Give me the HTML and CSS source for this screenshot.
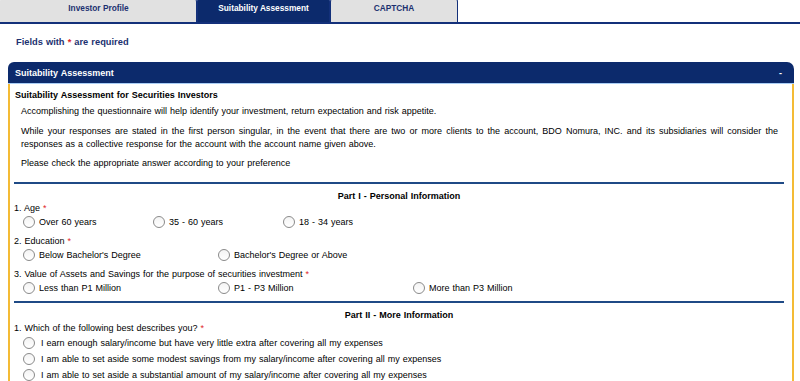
FILE: index.html
```html
<!DOCTYPE html>
<html lang="en">
<head>
  <meta charset="UTF-8">
  <title>Suitability Assessment</title>
  <meta name="viewport" content="width=device-width, initial-scale=1.0">
  <link rel="stylesheet" href="styles.css">
</head>
<body>

<div class="tabs">
  <div class="tab tab-profile">Investor Profile</div>
  <div class="tab tab-suit active">Suitability Assessment</div>
  <div class="tab tab-captcha">CAPTCHA</div>
</div>

<p class="required-note">Fields with <span class="req">*</span> are required</p>

<div class="panel">
  <div class="panel-head">
    <span>Suitability Assessment</span>
    <span class="toggle">-</span>
  </div>

  <div class="panel-body">
    <h3 class="intro-title">Suitability Assessment for Securities Investors</h3>
    <p class="intro">Accomplishing the questionnaire will help identify your investment, return expectation and risk appetite.</p>
    <p class="intro">While your responses are stated in the first person singular, in the event that there are two or more clients to the account, BDO Nomura, INC. and its subsidiaries will consider the responses as a collective response for the account with the account name given above.</p>
    <p class="intro">Please check the appropriate answer according to your preference</p>

    <!-- Part I -->
    <div class="part">Part I - Personal Information</div>

    <div class="question">
      <div class="q-label">1. Age <span class="req">*</span></div>
      <div class="options cols-age">
        <label class="opt"><input type="radio" name="age"> Over 60 years</label>
        <label class="opt"><input type="radio" name="age"> 35 - 60 years</label>
        <label class="opt"><input type="radio" name="age"> 18 - 34 years</label>
      </div>
    </div>

    <div class="question">
      <div class="q-label">2. Education <span class="req">*</span></div>
      <div class="options cols-wide">
        <label class="opt"><input type="radio" name="edu"> Below Bachelor's Degree</label>
        <label class="opt"><input type="radio" name="edu"> Bachelor's Degree or Above</label>
      </div>
    </div>

    <div class="question">
      <div class="q-label">3. Value of Assets and Savings for the purpose of securities investment <span class="req">*</span></div>
      <div class="options cols-wide">
        <label class="opt"><input type="radio" name="assets"> Less than P1 Million</label>
        <label class="opt"><input type="radio" name="assets"> P1 - P3 Million</label>
        <label class="opt"><input type="radio" name="assets"> More than P3 Million</label>
      </div>
    </div>

    <!-- Part II -->
    <div class="part">Part II - More Information</div>

    <div class="question">
      <div class="q-label q-tight">1. Which of the following best describes you? <span class="req">*</span></div>
      <div class="options stacked">
        <label class="opt"><input type="radio" name="income"> I earn enough salary/income but have very little extra after covering all my expenses</label>
        <label class="opt"><input type="radio" name="income"> I am able to set aside some modest savings from my salary/income after covering all my expenses</label>
        <label class="opt"><input type="radio" name="income"> I am able to set aside a substantial amount of my salary/income after covering all my expenses</label>
      </div>
    </div>
  </div>
</div>

</body>
</html>
```

FILE: styles.css
```css
body {
  margin: 0;
  padding: 0;
  font-family: "Liberation Sans", Arial, sans-serif;
  font-size: 9px;
  word-spacing: 0.5px;
  color: #000;
  background: #fff;
}

/* tab bar, top of the tabs is scrolled out of view */
.tabs {
  display: flex;
  margin-top: -4px;
  border-bottom: 2px solid #13307a;
}

.tab {
  height: 26px;
  box-sizing: border-box;
  padding-bottom: 3px;
  display: flex;
  align-items: center;
  justify-content: center;
  font-size: 8.3px;
  font-weight: bold;
  word-spacing: 0;
  color: #1c3170;
  background: #e1e1e1;
  border: 1px solid #13307a;
  border-bottom: 0;
  border-radius: 6px 6px 0 0;
}

.tab-profile { width: 197px; border-left-color: #e1e1e1; }
.tab-suit { width: 133px; }
.tab-captcha { width: 128px; }

.tab.active {
  background: #0c2a6c;
  color: #fff;
}

.required-note {
  margin: 12px 0 14px 16px;
  font-size: 9.3px;
  line-height: 12px;
  font-weight: bold;
  color: #1c3170;
}

.req {
  color: #e0262b;
}

.panel {
  margin: 0 6px 0 8px;
}

.panel-head {
  height: 21px;
  display: flex;
  align-items: center;
  justify-content: space-between;
  padding: 0 12px 0 7px;
  background: #0c2a6c;
  color: #fff;
  font-weight: bold;
  border-radius: 6px 7px 0 0;
  border-bottom: 1px solid #a9cdf5;
}

.toggle {
  font-weight: bold;
}

.panel-body {
  border-left: 2px solid #f4bb35;
  border-right: 2px solid #f4bb35;
  padding: 5px 8px 0 4px;
}

.intro-title {
  margin: 0 0 3px 1px;
  font-size: 9px;
  line-height: 13px;
}

.intro {
  margin: 0 0 6.5px;
  padding: 0 6px 0 7px;
  line-height: 13px;
  text-align: justify;
}

.part {
  margin-top: 12px;
  padding-top: 6px;
  border-top: 2px solid #1f4a86;
  text-align: center;
  font-weight: bold;
  line-height: 12px;
}

.question + .part {
  margin-top: 3px;
}

.question {
  margin-bottom: 6px;
}

.q-label {
  line-height: 13px;
}

.q-label.q-tight {
  line-height: 13px;
  margin-top: 1px;
}

.options {
  display: grid;
  padding-left: 9px;
}

.cols-age { grid-template-columns: repeat(3, 130px); }
.cols-wide { grid-template-columns: repeat(3, 195px); }

.stacked {
  grid-template-columns: 1fr;
}

.opt {
  display: flex;
  align-items: center;
  gap: 4px;
  height: 14px;
}

.stacked .opt {
  height: 16px;
  gap: 6px;
}

.opt input {
  appearance: none;
  -webkit-appearance: none;
  width: 12px;
  height: 12px;
  margin: 0;
  border: 1px solid #8a8a8a;
  border-radius: 50%;
  background: linear-gradient(#f4f4f4, #fff);
  box-sizing: border-box;
  flex: 0 0 auto;
}
```
